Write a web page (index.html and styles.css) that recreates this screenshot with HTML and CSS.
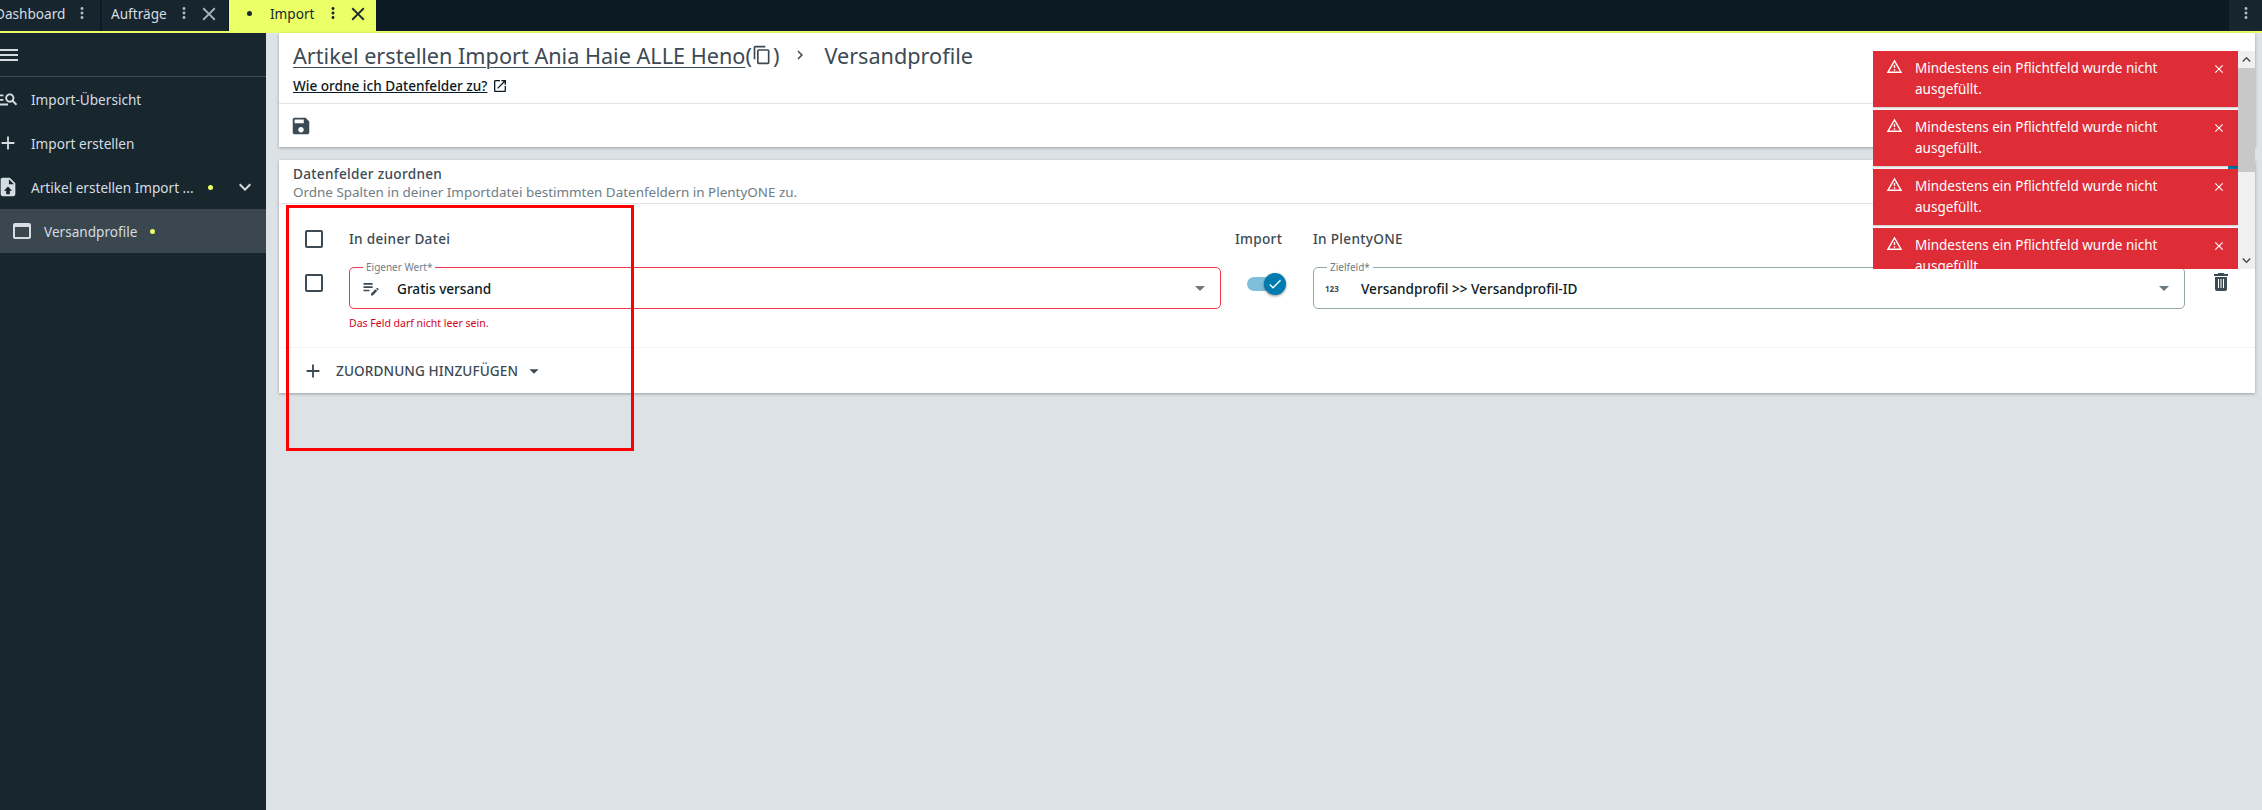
FILE: index.html
```html
<!DOCTYPE html>
<html lang="en">
<head>
<meta charset="UTF-8">
<title>Import - Versandprofile</title>
<link rel="stylesheet" href="styles.css">
</head>
<body>

<!-- Icon sprite -->
<svg class="sprite" xmlns="http://www.w3.org/2000/svg">
<symbol id="i-menu" viewBox="0 0 24 24"><path d="M3 18h18v-2H3v2zm0-5h18v-2H3v2zm0-7v2h18V6H3z"/></symbol>
<symbol id="i-more" viewBox="0 0 24 24"><path d="M12 8c1.1 0 2-.9 2-2s-.9-2-2-2-2 .9-2 2 .9 2 2 2zm0 2c-1.1 0-2 .9-2 2s.9 2 2 2 2-.9 2-2-.9-2-2-2zm0 6c-1.1 0-2 .9-2 2s.9 2 2 2 2-.9 2-2-.9-2-2-2z"/></symbol>
<symbol id="i-close" viewBox="0 0 24 24"><path d="M19 6.41L17.59 5 12 10.59 6.41 5 5 6.41 10.59 12 5 17.59 6.41 19 12 13.41 17.59 19 19 17.59 13.41 12z"/></symbol>
<symbol id="i-add" viewBox="0 0 24 24"><path d="M19 13h-6v6h-2v-6H5v-2h6V5h2v6h6v2z"/></symbol>
<symbol id="i-search" viewBox="0 0 24 24"><path d="M7 9H2V7h5v2zm0 3H2v2h5v-2zm13.59 7l-3.83-3.83c-.8.52-1.74.83-2.76.83-2.76 0-5-2.24-5-5s2.24-5 5-5 5 2.24 5 5c0 1.02-.31 1.96-.83 2.75L22 17.59 20.59 19zM17 11c0-1.65-1.35-3-3-3s-3 1.35-3 3 1.35 3 3 3 3-1.35 3-3zM2 19h10v-2H2v2z"/></symbol>
<symbol id="i-upload" viewBox="0 0 24 24"><path d="M14 2H6c-1.1 0-2 .9-2 2v16c0 1.1.9 2 2 2h12c1.1 0 2-.9 2-2V8l-6-6zm-1 7V3.5L18.5 9H13zm1 7v4h-4v-4H7.5l4.5-4.5 4.5 4.5H14z" fill-rule="evenodd"/></symbol>
<symbol id="i-expand" viewBox="0 0 24 24"><path d="M16.59 8.59L12 13.17 7.41 8.59 6 10l6 6 6-6z"/></symbol>
<symbol id="i-up" viewBox="0 0 24 24"><path d="M12 8l-6 6 1.41 1.41L12 10.83l4.59 4.58L18 14z"/></symbol>
<symbol id="i-web" viewBox="0 0 24 24"><path d="M19 4H5c-1.11 0-2 .9-2 2v12c0 1.1.89 2 2 2h14c1.1 0 2-.9 2-2V6c0-1.1-.89-2-2-2zm0 14H5V8h14v10z"/></symbol>
<symbol id="i-copy" viewBox="0 0 24 24"><path d="M16 1H4c-1.1 0-2 .9-2 2v14h2V3h12V1zm3 4H8c-1.1 0-2 .9-2 2v14c0 1.1.9 2 2 2h11c1.1 0 2-.9 2-2V7c0-1.1-.9-2-2-2zm0 16H8V7h11v14z"/></symbol>
<symbol id="i-chevron" viewBox="0 0 24 24"><path d="M10 6L8.59 7.41 13.17 12l-4.58 4.59L10 18l6-6z"/></symbol>
<symbol id="i-open" viewBox="0 0 24 24"><path d="M19 19H5V5h7V3H5c-1.11 0-2 .9-2 2v14c0 1.1.89 2 2 2h14c1.1 0 2-.9 2-2v-7h-2v7zM14 3v2h3.59l-9.83 9.83 1.41 1.41L19 6.41V10h2V3h-7z"/></symbol>
<symbol id="i-save" viewBox="0 0 24 24"><path d="M17 3H5c-1.11 0-2 .9-2 2v14c0 1.1.89 2 2 2h14c1.1 0 2-.9 2-2V7l-4-4zm-5 16c-1.66 0-3-1.34-3-3s1.34-3 3-3 3 1.34 3 3-1.34 3-3 3zm3-10H5V5h10v4z"/></symbol>
<symbol id="i-box" viewBox="0 0 24 24"><path d="M19 5v14H5V5h14m0-2H5c-1.1 0-2 .9-2 2v14c0 1.1.9 2 2 2h14c1.1 0 2-.9 2-2V5c0-1.1-.9-2-2-2z"/></symbol>
<symbol id="i-edit" viewBox="0 0 24 24"><path d="M3 10h11v2H3zm0-2h11V6H3zm0 8h7v-2H3zm15.01-3.13l.71-.71c.39-.39 1.02-.39 1.41 0l.71.71c.39.39.39 1.02 0 1.41l-.71.71-2.12-2.12zm-.71.71l-5.3 5.3V21h2.12l5.3-5.3-2.12-2.12z"/></symbol>
<symbol id="i-delete" viewBox="0 0 24 24"><path d="M19 4h-3.5l-1-1h-5l-1 1H5v2h14V4zM6 7v12c0 1.1.9 2 2 2h8c1.1 0 2-.9 2-2V7H6zm4 11H9V9h1v9zm5 0h-1V9h1v9zm-2.5 0h-1V9h1v9z" fill-rule="evenodd"/></symbol>
<symbol id="i-warning" viewBox="0 0 24 24"><path d="M12 5.99L19.53 19H4.47L12 5.99M12 2L1 21h22L12 2zm1 14h-2v2h2v-2zm0-6h-2v4h2v-4z"/></symbol>
<symbol id="i-check" viewBox="0 0 24 24"><path d="M9 16.17L4.83 12l-1.42 1.41L9 19 21 7l-1.41-1.41z"/></symbol>
<symbol id="i-drop" viewBox="0 0 24 24"><path d="M7 10l5 5 5-5z"/></symbol>
</svg>

<div class="tabbar">
<div class="tab tab-first">
<span>Dashboard</span>
<svg class="icon tab-more"><use href="#i-more"/></svg>
</div>
<div class="tab">
<span>Aufträge</span>
<svg class="icon tab-more"><use href="#i-more"/></svg>
<svg class="icon tab-close"><use href="#i-close"/></svg>
</div>
<div class="tab tab-active">
<span class="tab-dot"></span>
<span>Import</span>
<svg class="icon tab-more"><use href="#i-more"/></svg>
<svg class="icon tab-close"><use href="#i-close"/></svg>
</div>
<div class="tabbar-end">
<svg class="icon tab-more"><use href="#i-more"/></svg>
</div>
</div>

<div class="app">

<!-- Sidebar -->
<div class="sidebar">
<div class="side-top"><svg class="icon side-menu"><use href="#i-menu"/></svg></div>
<div class="side-item"><svg class="icon"><use href="#i-search"/></svg><span>Import-Übersicht</span></div>
<div class="side-item"><svg class="icon"><use href="#i-add"/></svg><span>Import erstellen</span></div>
<div class="side-item">
<svg class="icon"><use href="#i-upload"/></svg>
<span>Artikel erstellen Import ...</span>
<span class="side-dot"></span>
<svg class="icon side-expand"><use href="#i-expand"/></svg>
</div>
<div class="side-item side-sub">
<svg class="icon"><use href="#i-web"/></svg>
<span>Versandprofile</span>
<span class="side-dot"></span>
</div>
</div>

<!-- Main content -->
<div class="main">

<div class="panel panel-top">
<div class="page-head">
<div class="crumbs">
<a class="crumb-link">Artikel erstellen Import Ania Haie ALLE Heno</a>
<span>(</span><svg class="icon crumb-copy"><use href="#i-copy"/></svg><span>)</span>
<svg class="icon crumb-sep"><use href="#i-chevron"/></svg>
<span>Versandprofile</span>
</div>
<div class="help">
<a class="help-link">Wie ordne ich Datenfelder zu?</a>
<svg class="icon help-icon"><use href="#i-open"/></svg>
</div>
</div>
<div class="toolbar"><svg class="icon save-icon"><use href="#i-save"/></svg></div>
</div>

<div class="panel panel-map">
<div class="map-head">
<div>
<div class="map-title">Datenfelder zuordnen</div>
<div class="map-sub">Ordne Spalten in deiner Importdatei bestimmten Datenfeldern in PlentyONE zu.</div>
</div>
<div class="map-btn"></div>
</div>

<div class="map-grid">
<svg class="icon check-box"><use href="#i-box"/></svg>
<div class="col-title">In deiner Datei</div>
<div class="col-title">Import</div>
<div class="col-title">In PlentyONE</div>
<div></div>

<svg class="icon check-box check-row"><use href="#i-box"/></svg>
<div class="map-source">
<div class="field field-error">
<span class="field-label">Eigener Wert*</span>
<svg class="icon field-icon"><use href="#i-edit"/></svg>
<span class="field-value">Gratis versand</span>
<svg class="icon field-drop"><use href="#i-drop"/></svg>
</div>
<div class="field-msg">Das Feld darf nicht leer sein.</div>
</div>
<div class="toggle">
<span class="toggle-thumb"><svg class="icon"><use href="#i-check"/></svg></span>
</div>
<div class="field">
<span class="field-label">Zielfeld*</span>
<span class="field-num">123</span>
<span class="field-value">Versandprofil &gt;&gt; Versandprofil-ID</span>
<svg class="icon field-drop"><use href="#i-drop"/></svg>
</div>
<svg class="icon row-delete"><use href="#i-delete"/></svg>
</div>

<div class="add-row">
<svg class="icon add-icon"><use href="#i-add"/></svg>
<span>ZUORDNUNG HINZUFÜGEN</span>
<svg class="icon add-drop"><use href="#i-drop"/></svg>
</div>
</div>

</div>
</div>

<!-- Red marker drawn over the screenshot -->
<div class="marker"></div>

<!-- Notifications -->
<div class="toasts">
<div class="toast-list">
<div class="toast">
<svg class="icon toast-warn"><use href="#i-warning"/></svg>
<div class="toast-text">Mindestens ein Pflichtfeld wurde nicht ausgefüllt.</div>
<svg class="icon toast-close"><use href="#i-close"/></svg>
</div>
<div class="toast">
<svg class="icon toast-warn"><use href="#i-warning"/></svg>
<div class="toast-text">Mindestens ein Pflichtfeld wurde nicht ausgefüllt.</div>
<svg class="icon toast-close"><use href="#i-close"/></svg>
</div>
<div class="toast">
<svg class="icon toast-warn"><use href="#i-warning"/></svg>
<div class="toast-text">Mindestens ein Pflichtfeld wurde nicht ausgefüllt.</div>
<svg class="icon toast-close"><use href="#i-close"/></svg>
</div>
<div class="toast">
<svg class="icon toast-warn"><use href="#i-warning"/></svg>
<div class="toast-text">Mindestens ein Pflichtfeld wurde nicht ausgefüllt.</div>
<svg class="icon toast-close"><use href="#i-close"/></svg>
</div>
</div>
<div class="toast-scroll">
<svg class="icon"><use href="#i-up"/></svg>
<div class="toast-thumb"></div>
<svg class="icon toast-down"><use href="#i-expand"/></svg>
</div>
</div>

</body>
</html>
```

FILE: styles.css
```css
* {
margin: 0;
padding: 0;
box-sizing: border-box;
font-family: "Noto Sans", Arial, sans-serif;
}

html, body {
height: 100%;
overflow: hidden;
}

body {
background-color: #dde2e6;
color: #3c4a54;
font-size: 13.6px;
position: relative;
}

.sprite {
display: none;
}

.icon {
width: 24px;
height: 24px;
fill: currentColor;
flex-shrink: 0;
display: block;
}

/* Tab bar */
.tabbar {
height: 33px;
display: flex;
gap: 2px;
background: #0c1a23;
border-bottom: 2px solid #ebff66;
color: #d5dde2;
}

.tab {
display: flex;
align-items: center;
background: #17262e;
padding: 0 0 4px 9px;
width: 126px;
}

.tab-first {
margin-left: -5px;
width: 105px;
padding-left: 0;
}

.tab-more {
width: 18px;
height: 18px;
margin-left: 8px;
margin-top: -1px;
color: #aab6bd;
}

.tab-close {
width: 22px;
height: 22px;
margin-left: 5px;
color: #aab6bd;
}

.tab-active {
background: #ebff66;
color: #1a2730;
width: 147px;
margin-left: -1px;
padding-left: 18px;
}

.tab-active .tab-more {
margin-left: 10px;
color: #1a2730;
}

.tab-active .tab-close {
color: #1a2730;
}

.tab-dot {
width: 5px;
height: 5px;
border-radius: 50%;
background: #1a2730;
margin-right: 18px;
}

.tabbar-end {
margin-left: auto;
width: 33px;
display: flex;
align-items: center;
justify-content: center;
background: #17262e;
}

.tabbar-end .tab-more {
margin: -6px 0 0;
}

/* Layout */
.app {
display: flex;
height: calc(100% - 33px);
}

.sidebar {
width: 266px;
flex-shrink: 0;
background: #18262e;
color: #d5dde2;
}

.side-top {
height: 44px;
border-bottom: 1px solid #3c4a54;
display: flex;
align-items: center;
}

.side-menu {
margin-left: -3px;
}

.side-item {
height: 44px;
display: flex;
align-items: center;
gap: 12px;
white-space: nowrap;
}

.side-item > .icon:first-child {
width: 22px;
height: 22px;
margin-left: -3px;
}

.side-dot {
width: 5px;
height: 5px;
border-radius: 50%;
background: #ebff66;
margin-left: 2px;
}

.side-expand {
margin-left: 8px;
}

.side-sub {
gap: 10px;
background: #3b474e;
}

.side-sub > .icon:first-child {
width: 24px;
height: 24px;
margin-left: 10px;
}

.side-sub .side-dot {
margin-left: 3px;
}

.main {
flex: 1;
padding: 0 7px 0 13px;
}

.panel {
background: #fff;
box-shadow: 0 1px 3px rgba(0, 0, 0, 0.3);
}

.panel-top {
margin-bottom: 13px;
}

/* Page head */
.page-head {
height: 71px;
padding: 7px 14px 0;
border-bottom: 1px solid #e2e5e8;
}

.crumbs {
display: flex;
align-items: center;
font-size: 21.65px;
height: 30px;
}

.crumb-link {
text-decoration: underline;
text-underline-offset: 3px;
text-decoration-thickness: 1px;
}

.crumb-copy {
width: 20px;
height: 20px;
margin: 0 1px 0 0;
}

.crumb-sep {
width: 18px;
height: 18px;
margin: 0 15px 0 12px;
}

.help {
display: flex;
align-items: center;
gap: 5px;
margin-top: 6px;
font-weight: 500;
color: #0c1a23;
}

.help-link {
text-decoration: underline;
}

.help-icon {
width: 16px;
height: 16px;
}

.toolbar {
height: 43px;
padding-left: 11px;
display: flex;
align-items: center;
}

.save-icon {
width: 22px;
height: 22px;
}

/* Mapping panel */
.map-head {
height: 44px;
padding: 5px 0 0 14px;
border-bottom: 1px solid #e2e5e8;
display: flex;
justify-content: space-between;
}

.map-title {
font-weight: 500;
line-height: 18px;
letter-spacing: 0.3px;
}

.map-sub {
font-size: 13.45px;
line-height: 18px;
color: #6f7d87;
}

.map-btn {
width: 27px;
height: 34px;
margin-top: -1px;
border-radius: 4px 0 0 4px;
background: #007bb0;
}

.map-grid {
display: grid;
grid-template-columns: 24px 894px 92px 872px 24px;
padding: 23px 0 0 24px;
height: 144px;
grid-template-rows: 24px auto;
row-gap: 16px;
border-bottom: 1px solid #f5f6f7;
}

.check-box {
width: 24px;
height: 24px;
margin-left: -1px;
}

.check-row {
margin-top: 4px;
}

.col-title {
font-weight: 500;
line-height: 24px;
letter-spacing: 0.3px;
}

.col-title:nth-child(2) {
margin-left: 22px;
}

.col-title:nth-child(3) {
padding-left: 14px;
}

.map-source {
margin-left: 22px;
}

.field {
height: 42px;
width: 872px;
border: 1px solid #95a3ab;
border-radius: 5px;
display: flex;
align-items: center;
padding: 0 8px 0 11px;
position: relative;
color: #0c1a23;
}

.field-error {
border-color: #f0344a;
}

.field-label {
position: absolute;
top: -6px;
left: 13px;
padding: 0 3px;
background: #fff;
font-size: 10px;
line-height: 11px;
color: #6f7d87;
}

.field-icon {
width: 20px;
height: 20px;
color: #3c4a54;
}

.field-num {
width: 20px;
font-size: 8px;
font-weight: 700;
color: #3c4a54;
}

.field-value {
margin-left: 16px;
font-weight: 500;
}

.field-drop {
margin-left: auto;
color: #6a7881;
}

.field-msg {
margin-top: 7px;
font-size: 10.5px;
color: #d0021b;
}

.toggle {
width: 24px;
height: 14px;
margin: 10px 0 0 26px;
border-radius: 7px;
background: #7fbfdc;
position: relative;
}

.toggle-thumb {
position: absolute;
top: -4px;
left: 17px;
width: 22px;
height: 22px;
border-radius: 50%;
background: #007bb0;
color: #fff;
box-shadow: 0 1px 3px rgba(0, 0, 0, 0.45);
display: flex;
align-items: center;
justify-content: center;
}

.toggle-thumb .icon {
width: 16px;
height: 16px;
}

.row-delete {
margin: 3px 0 0 24px;
width: 24px;
height: 24px;
}

.add-row {
height: 45px;
padding-left: 23px;
display: flex;
align-items: center;
font-weight: 500;
letter-spacing: 0.1px;
}

.add-icon {
width: 22px;
height: 22px;
margin-right: 12px;
}

.add-drop {
width: 22px;
height: 22px;
margin-left: 5px;
}

/* Red marker */
.marker {
position: absolute;
left: 286px;
top: 205px;
width: 348px;
height: 246px;
border: 3px solid #f00;
}

/* Notifications */
.toasts {
position: absolute;
top: 51px;
left: 1873px;
width: 382px;
height: 218px;
overflow: hidden;
display: flex;
}

.toast-list {
width: 365px;
flex-shrink: 0;
}

.toast {
height: 56px;
margin-bottom: 3px;
background: #de2d37;
color: #fff;
display: flex;
padding: 7px 12px 0 13px;
box-shadow: 0 1px 2px rgba(0, 0, 0, 0.25);
}

.toast-warn {
width: 17px;
height: 17px;
}

.toast-text {
width: 265px;
margin-left: 12px;
font-size: 13.5px;
line-height: 21px;
}

.toast-close {
width: 14px;
height: 14px;
margin: 4px 0 0 auto;
}

.toast-scroll {
flex: 1;
background: #f0f0f0;
color: #4a4a4a;
display: flex;
flex-direction: column;
}

.toast-scroll .icon {
width: 17px;
height: 17px;
}

.toast-thumb {
height: 104px;
background: #c8c8c8;
}

.toast-down {
margin-top: auto;
}
```
